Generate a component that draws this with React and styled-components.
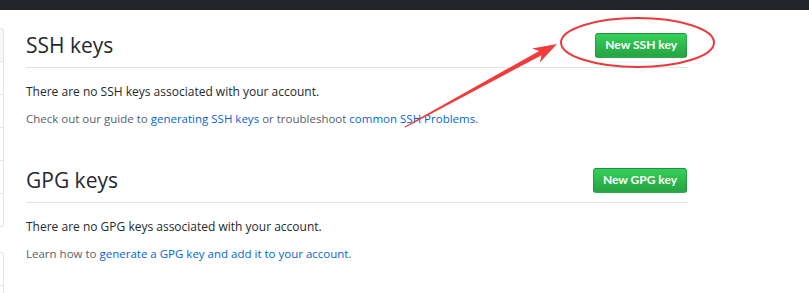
import styled, { createGlobalStyle } from "styled-components";

const GlobalStyle = createGlobalStyle`
  html, body {
    margin: 0;
    padding: 0;
    background: #fff;
  }
  body {
    font-family: "Open Sans", "Noto Sans", "Liberation Sans", sans-serif;
    color: #24292e;
  }
`;

const Page = styled.div`
  position: relative;
  width: 809px;
  height: 293px;
  overflow: hidden;
  background: #fff;
`;

const TopBar = styled.div`
  height: 10px;
  background: #212428;
`;

const Layout = styled.div`
  display: flex;
  gap: 22px;
`;

const Sidebar = styled.nav`
  width: 4px;
  display: flex;
  flex-direction: column;
  gap: 25px;
  padding-top: 18px;
`;

const Menu = styled.div`
  border: 1px solid #e1e4e8;
  border-left: none;
  border-top-right-radius: 3px;
  border-bottom-right-radius: 3px;
  overflow: hidden;
`;

const MenuItem = styled.div`
  height: 32px;
  background: ${(props) => (props.selected ? "#f6f8fa" : "#fff")};
  border-bottom: ${(props) => (props.last ? "none" : "1px solid #e1e4e8")};
`;

const Main = styled.main`
  width: 662px;
  padding-top: 17px;
`;

const Section = styled.section`
  margin-bottom: 33px;
`;

const Subhead = styled.div`
  display: flex;
  align-items: center;
  justify-content: space-between;
  padding-bottom: 4px;
  border-bottom: 1px solid #e1e4e8;
  margin-bottom: 14px;
`;

const Heading = styled.h2`
  margin: 0;
  font-size: 21px;
  line-height: 36px;
  font-weight: 400;
  color: #24292e;
`;

const Button = styled.button`
  font-family: Lato, "Open Sans", sans-serif;
  font-size: 12px;
  font-weight: 700;
  line-height: 20px;
  color: #fff;
  padding: 1px 9px;
  height: 25px;
  border: 1px solid rgba(27, 31, 35, 0.2);
  border-radius: 3px;
  background: linear-gradient(-180deg, #34d058 0%, #28a745 90%);
  cursor: pointer;
  margin-right: 1px;
`;

const Text = styled.p`
  margin: 0 0 7px;
  font-size: ${(props) => (props.muted ? "11.5px" : "12px")};
  line-height: 20px;
  color: ${(props) => (props.muted ? "#586069" : "#24292e")};
`;

const Link = styled.a`
  color: #0366d6;
  text-decoration: none;
`;

const Annotation = styled.svg`
  position: absolute;
  top: 0;
  left: 0;
  pointer-events: none;
`;

function KeySection({ title, button, children }) {
  return (
    <Section>
      <Subhead>
        <Heading>{title}</Heading>
        <Button>{button}</Button>
      </Subhead>
      {children}
    </Section>
  );
}

export default function App() {
  return (
    <Page>
      <GlobalStyle />
      <TopBar />
      <Layout>
        <Sidebar>
          <Menu>
            <MenuItem selected />
            <MenuItem />
            <MenuItem />
            <MenuItem />
            <MenuItem />
            <MenuItem last />
          </Menu>
          <Menu>
            <MenuItem />
            <MenuItem last />
          </Menu>
        </Sidebar>
        <Main>
          <KeySection title="SSH keys" button="New SSH key">
            <Text>There are no SSH keys associated with your account.</Text>
            <Text muted>
              Check out our guide to <Link href="#">generating SSH keys</Link>{" "}
              or troubleshoot <Link href="#">common SSH Problems</Link>.
            </Text>
          </KeySection>
          <KeySection title="GPG keys" button="New GPG key">
            <Text>There are no GPG keys associated with your account.</Text>
            <Text muted>
              Learn how to{" "}
              <Link href="#">generate a GPG key and add it to your account</Link>.
            </Text>
          </KeySection>
        </Main>
      </Layout>
      <Annotation width="809" height="293" viewBox="0 0 809 293">
        <ellipse
          cx="637.5"
          cy="42.5"
          rx="76.5"
          ry="24.5"
          fill="none"
          stroke="#ec3a3c"
          strokeWidth="2"
        />
        <polygon
          fill="#f23b3b"
          points="404.7,126.5 405.3,127.5 541.5,55.3 539.8,62.5 557,44 532.1,48.5 539.1,50.9"
        />
      </Annotation>
    </Page>
  );
}
